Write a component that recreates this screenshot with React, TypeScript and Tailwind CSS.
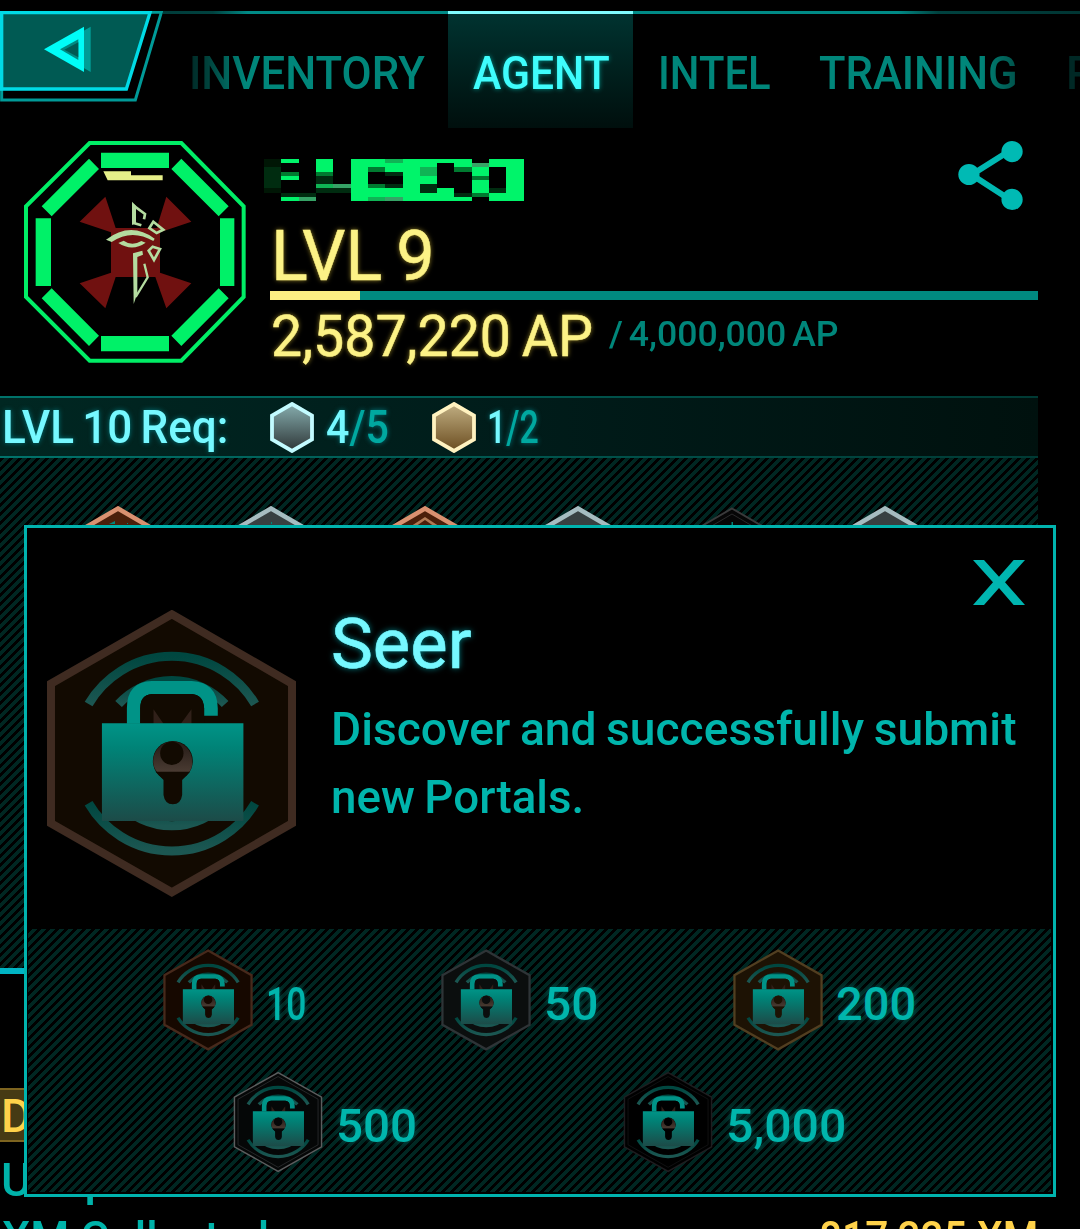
import { useId, useLayoutEffect, useRef, useState } from 'react';
import type { ReactNode } from 'react';
import clsx from 'clsx';

const STRIPES =
  'bg-[linear-gradient(135deg,#000_25%,#002722_25%,#002722_50%,#000_50%,#000_75%,#002722_75%)] bg-[length:9px_9px]';

// Condenses its text horizontally so that it fills exactly `width` pixels.
function Fit({ width, className, children }: { width: number; className?: string; children: ReactNode }) {
  const ref = useRef<HTMLSpanElement>(null);
  const [scale, setScale] = useState(1);

  useLayoutEffect(() => {
    if (ref.current) setScale(width / ref.current.offsetWidth);
  }, [width]);

  return (
    <span className={clsx('block shrink-0 whitespace-nowrap', className)} style={{ width }}>
      <span ref={ref} className="inline-block origin-left" style={{ transform: `scaleX(${scale})` }}>
        {children}
      </span>
    </span>
  );
}

function BackButton() {
  return (
    <button className="h-[91px] w-[163px] shrink-0" aria-label="Back">
      <svg viewBox="0 33 489 273" className="h-full w-full">
        <path d="M0 37H484L406 300H5V37" fill="none" stroke="#009a98" strokeWidth="9" />
        <path d="M5 38H450L379 267H5Z" fill="#005a53" stroke="#00dbe6" strokeWidth="10" />
        <path d="M272 80V216L155 148Z" fill="#009c96" />
        <path d="M132 148L252 80V216Z" fill="#00fdf8" />
        <path d="M180 148L235 118V180Z" fill="#008a82" />
        <path d="M193 149L235 127V172Z" fill="#005a53" />
      </svg>
    </button>
  );
}

function Header() {
  return (
    <header className="flex h-[128px] pt-[11px]">
      <BackButton />
      <nav className="flex h-[117px] w-[917px] overflow-hidden bg-[linear-gradient(90deg,#003c3a_0,#00423f_50px,#008a86_85px,#008a86_735px,#00423f_775px,#003533_100%)] bg-[length:100%_3px] bg-no-repeat text-[47px] leading-[124px] font-medium text-[#00867a]">
        <Fit
          width={236}
          className="ml-[26px] [mask-image:linear-gradient(90deg,rgba(0,0,0,.3)_0,rgba(0,0,0,.5)_20px,#000_56px)]"
        >
          INVENTORY
        </Fit>
        <div className="ml-[23px] w-[185px] shrink-0 border-t-[3px] border-[#7ffcff] bg-linear-to-b from-[#003330] to-[#000f0d] pl-[25px] leading-[118px] text-[#3ffcfc] [text-shadow:0_0_6px_#00918a]">
          <Fit width={137}>AGENT</Fit>
        </div>
        <Fit width={113} className="ml-[25px]">
          INTEL
        </Fit>
        <Fit width={199} className="ml-[48px] [mask-image:linear-gradient(90deg,#000_160px,rgba(0,0,0,.6))]">
          TRAINING
        </Fit>
        <Fit width={225} className="ml-[48px] opacity-30">
          PASSCODE
        </Fit>
      </nav>
    </header>
  );
}

function Avatar() {
  return (
    <svg viewBox="0 0 750 735" className="mt-[2px] ml-[10px] h-[245px] w-[250px] shrink-0">
      <path d="M239 39H514L701 229V501L514 692H239L48 501V229Z" fill="none" stroke="#00ee66" strokeWidth="12" />
      <g fill="#00f168">
        <path d="M273 68H477V114H273ZM273 618H477V664H273ZM77 265H123V468H77ZM630 265H673V468H630Z" />
        <path d="M237 86L267 117L125 259L95 229ZM514 86L656 229L626 259L484 117ZM125 475L267 617L237 648L95 505ZM626 475L656 505L514 648L484 617Z" />
      </g>
      <path d="M280 124H363V136H458V151H293Z" fill="#e6ef8a" />
      <g fill="#701110">
        <path d="M303 294H450V441H303Z" />
        <path d="M286 200L317 294L303 307L209 275ZM469 200L544 275L450 307L441 290ZM209 460L303 428L317 441L286 535ZM450 428L544 460L469 535L436 441Z" />
      </g>
      <g fill="none" stroke="#b4dca0" strokeWidth="8">
        <path d="M394 286L371 279V227L405 252L402 268" />
        <path d="M430 275L460 299L440 309L418 294Z" />
        <path d="M428 350L450 357L432 390L416 362Z" />
        <path d="M403 401L413 442L377 501" strokeWidth="7" />
      </g>
      <g fill="#b4dca0">
        <path d="M366 215L378 227V280L366 285Z" />
        <path d="M288 329Q362 273 434 326L430 333Q365 295 305 336Z" />
        <path d="M325 339L341 332Q366 350 394 333L407 338Q367 366 325 339Z" />
        <path d="M369 370L397 362L399 374L382 381V490L371 522Z" />
      </g>
    </svg>
  );
}

// Agent name, pixelated beyond reading.
const NAME_ROWS = [
  'dG.G.GGmGGGG.GG',
  'd..G.GGGGG.GxGG',
  'D..G.GnGGm.nG.G',
  'Dn.n.G.DGm..G.G',
  'DG.D.G..GG..n.G',
  'D..D.G..GG..G.G',
  'D..mxGnDGD..G.G',
  'd..DDGGGGDG.GDG',
  '.DD..GGGGGGDnGG',
  '.Gx..GmxGGGG.GG',
];
const NAME_COLS = [27, 78, 132, 183, 234, 288, 339, 390, 444, 495, 546, 597, 651, 702, 753, 807];
const NAME_COLORS: Record<string, string> = {
  G: '#00f46a',
  m: '#0fb455',
  n: '#007a30',
  x: '#36a366',
  D: '#002c10',
  d: '#001605',
};

function AgentName() {
  return (
    <svg
      viewBox="27 72 780 125"
      className="-ml-[6px] h-[42px] w-[260px]"
      preserveAspectRatio="none"
      shapeRendering="crispEdges"
    >
      {NAME_ROWS.flatMap((row, y) =>
        [...row].map((cell, x) =>
          cell === '.' ? null : (
            <rect
              key={`${x}-${y}`}
              x={NAME_COLS[x]}
              y={72 + y * 12.5}
              width={NAME_COLS[x + 1] - NAME_COLS[x]}
              height={12.5}
              fill={NAME_COLORS[cell]}
            />
          ),
        ),
      )}
    </svg>
  );
}

function ShareIcon() {
  return (
    <svg viewBox="1206 18 194 208" className="-mt-[18px] mr-[15px] h-[69px] w-[65px]">
      <path d="M1368 43L1246 120L1368 199" fill="none" stroke="#00b8b2" strokeWidth="18" />
      <g fill="#00bab4">
        <circle cx="1368" cy="50" r="32" />
        <circle cx="1238" cy="119" r="32" />
        <circle cx="1368" cy="194" r="32" />
      </g>
    </svg>
  );
}

function Profile() {
  return (
    <section className="flex h-[268px]">
      <div className="w-[270px] shrink-0">
        <Avatar />
      </div>
      <div className="w-[768px] pt-[31px] text-[#fcf286] [text-shadow:0_0_5px_#a08c28]">
        <div className="flex h-[42px] justify-between">
          <AgentName />
          <ShareIcon />
        </div>
        <Fit
          width={164}
          className="ml-px h-[90px] pt-[20px] text-[70px] leading-[70px] [word-spacing:-3px] [-webkit-text-stroke:0.5px_#fcf286]"
        >
          LVL 9
        </Fit>
        <div className="flex h-[9px] bg-[#008a80]">
          <div className="w-[90px] bg-[#fcef83]" />
        </div>
        <div className="flex h-[73px] text-[57px] leading-[73px]">
          <Fit width={322} className="ml-px [word-spacing:-3px] [-webkit-text-stroke:0.5px_#fcf286]">
            2,587,220 AP
          </Fit>
          <Fit
            width={230}
            className="ml-[16px] text-[35px] leading-[69px] font-medium text-[#00867a] [text-shadow:none] [word-spacing:-3px]"
          >
            / 4,000,000 AP
          </Fit>
        </div>
      </div>
    </section>
  );
}

function ReqHex({ from, to, stroke }: { from: string; to: string; stroke: string }) {
  const id = useId();
  return (
    <svg viewBox="0 0 44 51" className="h-[51px] w-[44px]">
      <linearGradient id={id} x1="0" y1="0" x2="0" y2="1">
        <stop offset="0" stopColor={from} />
        <stop offset="1" stopColor={to} />
      </linearGradient>
      <path d="M22 2L42 13.5V37.5L22 49L2 37.5V13.5Z" fill={`url(#${id})`} stroke={stroke} strokeWidth="3.8" />
    </svg>
  );
}

function Requirements() {
  return (
    <div className="w-[1038px] bg-linear-to-r from-[#00736b] to-[#003a34] py-[2px]">
      <div className="flex h-[58px] items-center bg-linear-to-r from-[#002722] via-[#001c1a] to-[#00110e] text-[47px] leading-[62px] font-medium text-[#76f8ff] [text-shadow:0_0_6px_#00757a]">
        <Fit width={226} className="ml-[2px] [word-spacing:-3px]">
          LVL 10 Req:
        </Fit>
        <div className="ml-[42px] flex items-center gap-[12px]">
          <ReqHex from="#86adae" to="#2e3637" stroke="#c3fbff" />
          <Fit width={63}>
            4<span className="text-[#00a8a0]">/5</span>
          </Fit>
        </div>
        <div className="ml-[43px] flex items-center gap-[11px]">
          <ReqHex from="#c0ae82" to="#6b4d20" stroke="#fff2c0" />
          <Fit width={52}>
            1<span className="text-[#00a8a0]">/2</span>
          </Fit>
        </div>
      </div>
    </div>
  );
}

const MEDALS = [
  { fill: '#4a1f0a', stroke: '#d99170', width: 4.5, mark: 'M54 18L60 15V18ZM72 17V18H73V17Z' },
  { fill: '#384041', stroke: '#a6bcc0', width: 4.5, mark: 'M63 16V18H64V16Z' },
  { fill: '#4a1f0a', stroke: '#d99170', width: 4.5, mark: 'M55 19.5L63 14L71 19.5H76L63 11L50 19.5Z' },
  { fill: '#384041', stroke: '#a6bcc0', width: 4.5, mark: '' },
  { fill: '#060606', stroke: '#3a3a3b', width: 2, mark: 'M62.500 16V19H64V16Z' },
  { fill: '#384041', stroke: '#a6bcc0', width: 4.5, mark: '' },
];

function MedalRow() {
  return (
    <div className={clsx('h-[510px] w-[1038px] pt-[48px] pl-[41px]', STRIPES)}>
      <div className="grid w-[921px] grid-cols-6 justify-items-center">
        {MEDALS.map((m, i) => (
          <svg key={i} viewBox="0 0 126 146" className="h-[146px] w-[126px]">
            <path
              d="M63 2.500L124 38V108L63 143L2 108V38Z"
              fill={m.fill}
              stroke={m.stroke}
              strokeWidth={m.width}
            />
            {i === 4 && <path d="M63 8L119 41V105L63 137L7 105V41Z" fill="none" stroke="#2a2a2b" />}
            <path d={m.mark} fill={i === 2 ? '#b07a55' : '#00857a'} />
          </svg>
        ))}
      </div>
    </div>
  );
}

function Stats() {
  return (
    <section className="w-[1038px] border-t-[6px] border-[#00b4c4] text-[47px] leading-[58px] font-medium text-[#00b3aa]">
      <h2 className="mt-[114px] h-[54px] border-y-2 border-[#7d641f] bg-[#463a14] pl-px leading-[51px] text-[#ffd24a]">
        <Fit width={206}>Discovery</Fit>
      </h2>
      <div className="mt-[9px] pl-px">
        <Fit width={464}>Unique Portals Visited</Fit>
      </div>
      <div className="flex justify-between pl-[2px]">
        <Fit width={267}>XM Collected</Fit>
        <Fit width={219} className="text-[#ffd24a]">
          817,335 XM
        </Fit>
      </div>
    </section>
  );
}

type BadgeProps = { className: string; fill: string; stroke: string; border: number; inner?: string };

function SeerBadge({ className, fill, stroke, border, inner }: BadgeProps) {
  const id = useId();
  return (
    <svg viewBox="50 45 748 861" preserveAspectRatio="none" className={clsx('shrink-0', className)}>
      <linearGradient id={`${id}b`} x1="0" y1="0" x2="0" y2="1">
        <stop offset="0" stopColor="#009487" />
        <stop offset="0.25" stopColor="#008377" />
        <stop offset="1" stopColor="#1c4b48" />
      </linearGradient>
      <linearGradient id={`${id}a`} x1="0" y1="0" x2="0" y2="1">
        <stop offset="0" stopColor="#004740" />
        <stop offset="1" stopColor="#1c5752" />
      </linearGradient>
      <linearGradient id={`${id}k`} x1="0" y1="0" x2="0" y2="1">
        <stop offset="0" stopColor="#241a15" />
        <stop offset="1" stopColor="#4b3c33" />
      </linearGradient>
      <path d="M425 58L786 266V685L425 892L62 685V266Z" fill={fill} stroke={stroke} strokeWidth={border} />
      {inner && (
        <path d="M425 92L757 283V668L425 858L92 668V283Z" fill="none" stroke={inner} strokeWidth="7" />
      )}
      <g fill="none" stroke={`url(#${id}a)`} strokeWidth="27">
        <path d="M175 327A290 290 0 0 1 675 327" />
        <path d="M175 625A290 290 0 0 0 675 625" />
        <path d="M265 327A217 217 0 0 1 585 327" />
        <path d="M265 622A217 217 0 0 0 585 622" />
      </g>
      <path d="M290 386V340Q290 260 365 258H485Q562 262 563 340V362H522V340Q520 300 485 297H365Q330 300 330 340V386Z" fill="#009387" />
      <path d="M330 386V340Q330 300 365 297H485Q520 300 522 340V386Z" fill={fill} />
      <path d="M370 343L400 386H370ZM484 343V386H452Z" fill="#302019" />
      <path d="M215 385H640V678H215Z" fill={`url(#${id}b)`} />
      <circle cx="428" cy="498" r="60" fill={fill} />
      <path d="M369 498A58 58 0 0 1 486 498Q488 518 476 533H382Q369 518 369 498Z" fill={`url(#${id}k)`} />
      <path d="M376 530H480L456 555V600Q452 628 428 628Q404 628 400 600V555Z" fill={fill} />
      <circle cx="425" cy="475" r="35" fill={fill} />
    </svg>
  );
}

const TIERS = [
  [
    { label: '10', width: 40, fill: '#160800', stroke: '#47291b', border: 19 },
    { label: '50', width: 54, fill: '#0b0e0e', stroke: '#2e3437', border: 19 },
    { label: '200', width: 80, fill: '#1d1204', stroke: '#513e20', border: 19 },
  ],
  [
    { label: '500', width: 81, fill: '#050707', stroke: '#5c5d5e', border: 12, inner: '#2b2e2f' },
    { label: '5,000', width: 120, fill: '#000000', stroke: '#1f1d20', border: 12, inner: '#131315' },
  ],
];

function MedalDialog() {
  return (
    <div
      role="dialog"
      aria-label="Seer"
      className="absolute top-[525px] left-[24px] h-[672px] w-[1032px] border-[3px] border-[#00b3ae] bg-black font-medium"
    >
      <div className="flex h-[401px]">
        <SeerBadge
          className="mt-[82px] ml-[20px] h-[287px] w-[249px]"
          fill="#120a01"
          stroke="#3f2b21"
          border={24}
        />
        <div className="ml-[35px] w-[686px] pt-[74px]">
          <Fit
            width={141}
            className="text-[70px] leading-[84px] font-normal text-[#76f8ff] [-webkit-text-stroke:0.6px_#76f8ff] [text-shadow:0_0_6px_#008a90]"
          >
            Seer
          </Fit>
          <p className="mt-[9px] text-[47px] leading-[68px] text-[#00b5ac] [word-spacing:-2px]">
            <Fit width={686}>Discover and successfully submit</Fit>
            <Fit width={253}>new Portals.</Fit>
          </p>
        </div>
        <button className="mt-[32px] -ml-[44px] h-[45px] w-[52px]" aria-label="Close">
          <svg viewBox="0 0 156 135" className="h-full w-full">
            <path d="M0 0H33L78 50L122 0H156L96 67L156 135H122L78 84L33 135H0L60 67Z" fill="#00b5b0" />
          </svg>
        </button>
      </div>
      <div className={clsx('mr-[2px] ml-px flex h-[263px] flex-col gap-[20px] pt-[20px]', STRIPES)}>
        {TIERS.map((row, i) => (
          <div key={i} className="flex justify-evenly">
            {row.map(({ label, width, ...badge }) => (
              <div
                key={label}
                className="flex h-[102px] items-center gap-[13px] text-[47px] leading-[58px] text-[#00b5ac] [text-shadow:0_0_6px_#005a55]"
              >
                <SeerBadge className="h-[102px] w-[90px]" {...badge} />
                <Fit width={width} className="mt-[7px]">
                  {label}
                </Fit>
              </div>
            ))}
          </div>
        ))}
      </div>
    </div>
  );
}

export default function App() {
  return (
    <main className="relative h-[1229px] w-[1080px] overflow-hidden bg-black font-[Roboto,sans-serif]">
      <Header />
      <Profile />
      <Requirements />
      <MedalRow />
      <Stats />
      <MedalDialog />
    </main>
  );
}
